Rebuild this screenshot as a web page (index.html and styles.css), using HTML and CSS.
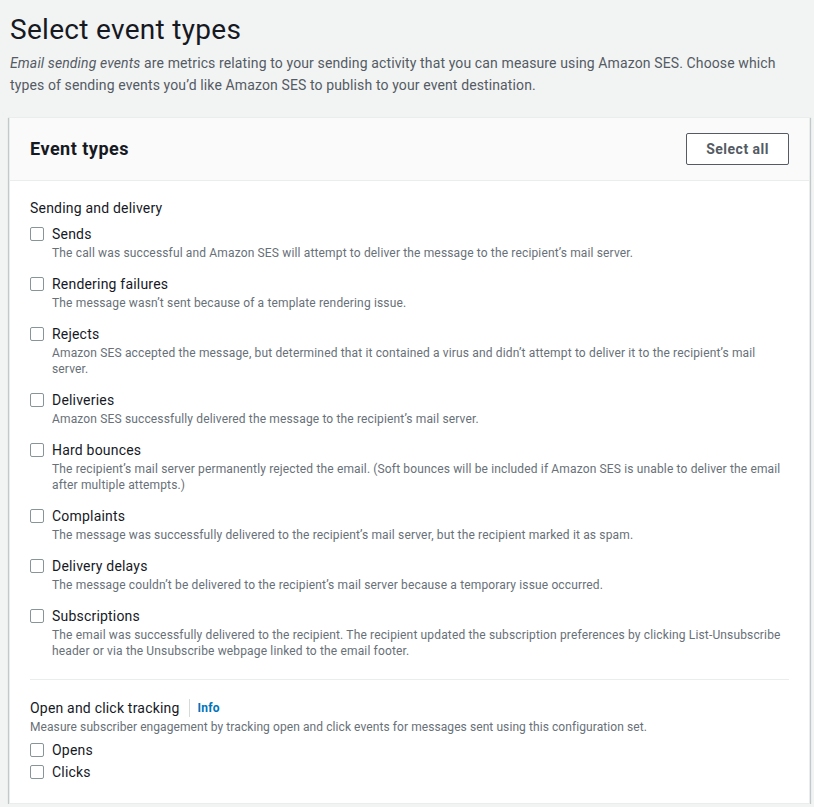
FILE: index.html
```html
<!DOCTYPE html>
<html>
<head>
<meta charset="utf-8">
<link rel="stylesheet" href="styles.css">
</head>
<body>
<div class="page">
  <h1 class="title">Select event types</h1>
  <p class="intro"><em>Email sending events</em> are metrics relating to your sending activity that you can measure using Amazon SES. Choose which types of sending events you’d like Amazon SES to publish to your event destination.</p>

  <div class="card">
    <div class="card-header">
      <h2 class="card-title">Event types</h2>
      <button class="btn">Select all</button>
    </div>
    <div class="card-body">
      <div class="group">
        <div class="group-label">Sending and delivery</div>
        <div class="options">
          <label class="option">
            <span class="box"></span>
            <span class="option-text"><span class="option-label">Sends</span><span class="option-desc">The call was successful and Amazon SES will attempt to deliver the message to the recipient’s mail server.</span></span>
          </label>
          <label class="option">
            <span class="box"></span>
            <span class="option-text"><span class="option-label">Rendering failures</span><span class="option-desc">The message wasn’t sent because of a template rendering issue.</span></span>
          </label>
          <label class="option">
            <span class="box"></span>
            <span class="option-text"><span class="option-label">Rejects</span><span class="option-desc">Amazon SES accepted the message, but determined that it contained a virus and didn’t attempt to deliver it to the recipient’s mail server.</span></span>
          </label>
          <label class="option">
            <span class="box"></span>
            <span class="option-text"><span class="option-label">Deliveries</span><span class="option-desc">Amazon SES successfully delivered the message to the recipient’s mail server.</span></span>
          </label>
          <label class="option">
            <span class="box"></span>
            <span class="option-text"><span class="option-label">Hard bounces</span><span class="option-desc">The recipient’s mail server permanently rejected the email. (Soft bounces will be included if Amazon SES is unable to deliver the email after multiple attempts.)</span></span>
          </label>
          <label class="option">
            <span class="box"></span>
            <span class="option-text"><span class="option-label">Complaints</span><span class="option-desc">The message was successfully delivered to the recipient’s mail server, but the recipient marked it as spam.</span></span>
          </label>
          <label class="option">
            <span class="box"></span>
            <span class="option-text"><span class="option-label">Delivery delays</span><span class="option-desc">The message couldn’t be delivered to the recipient’s mail server because a temporary issue occurred.</span></span>
          </label>
          <label class="option">
            <span class="box"></span>
            <span class="option-text"><span class="option-label">Subscriptions</span><span class="option-desc">The email was successfully delivered to the recipient. The recipient updated the subscription preferences by clicking List-Unsubscribe header or via the Unsubscribe webpage linked to the email footer.</span></span>
          </label>
        </div>
      </div>

      <div class="divider"></div>

      <div class="group">
        <div class="group-label">Open and click tracking <span class="sep"></span><a class="info">Info</a></div>
        <div class="group-desc">Measure subscriber engagement by tracking open and click events for messages sent using this configuration set.</div>
        <div class="options compact">
          <label class="option">
            <span class="box"></span>
            <span class="option-text"><span class="option-label">Opens</span></span>
          </label>
          <label class="option">
            <span class="box"></span>
            <span class="option-text"><span class="option-label">Clicks</span></span>
          </label>
        </div>
      </div>
    </div>
  </div>
</div>
</body>
</html>
```

FILE: styles.css
```css
html, body {
  margin: 0;
  padding: 0;
  background: #f2f3f3;
}
body {
  font-family: Roboto, "Liberation Sans", Arial, sans-serif;
  color: #16191f;
  letter-spacing: 0.2px;
}
.page {
  padding: 13px 4px 0 9px;
}
.title {
  margin: 0;
  font-size: 28px;
  font-weight: 400;
  line-height: 34px;
  color: #16191f;
  padding-left: 1px;
  letter-spacing: 0.3px;
}
.intro {
  margin: 5px 0 0 1px;
  font-size: 14px;
  line-height: 22px;
  color: #545b64;
  letter-spacing: 0.12px;
}
.intro em {
  font-style: italic;
}
.card {
  margin-top: 21px;
  background: #fff;
  border: 1px solid #eaeded;
  box-shadow: 0 1px 1px 0 rgba(0, 28, 36, 0.3), 1px 1px 1px 0 rgba(0, 28, 36, 0.15), -1px 1px 1px 0 rgba(0, 28, 36, 0.15);
}
.card-header {
  display: flex;
  align-items: center;
  justify-content: space-between;
  height: 62px;
  padding: 0 20px;
  background: #fafafa;
  border-bottom: 1px solid #eaeded;
}
.card-title {
  margin: 0;
  font-size: 18px;
  font-weight: 700;
  line-height: 22px;
  color: #16191f;
  letter-spacing: 0.5px;
}
.btn {
  height: 32px;
  padding: 0 19px;
  background: #fff;
  border: 1px solid #545b64;
  border-radius: 2px;
  font-family: inherit;
  font-size: 14px;
  font-weight: 700;
  color: #545b64;
  letter-spacing: 0.5px;
}
.card-body {
  padding: 16px 20px 20px;
}
.group-label {
  display: flex;
  align-items: center;
  font-size: 14px;
  line-height: 22px;
  color: #16191f;
}
.sep {
  display: inline-block;
  width: 1px;
  height: 18px;
  background: #d5dbdb;
  margin: 0 8px 0 9px;
}
.info {
  font-size: 12px;
  font-weight: 700;
  color: #0073bb;
}
.group-desc {
  font-size: 12px;
  line-height: 16px;
  color: #687078;
  letter-spacing: 0.08px;
}
.options {
  margin-top: 4px;
  display: flex;
  flex-direction: column;
  gap: 12px;
}
.options.compact {
  gap: 0;
}
.option {
  display: flex;
  align-items: flex-start;
}
.box {
  flex: none;
  width: 14px;
  height: 14px;
  margin-top: 4px;
  box-sizing: border-box;
  border: 1px solid #879596;
  border-radius: 2px;
  background: #fff;
  margin-right: 8px;
}
.option-text {
  display: flex;
  flex-direction: column;
}
.option-label {
  font-size: 14px;
  line-height: 22px;
  color: #16191f;
}
.option-desc {
  font-size: 12px;
  line-height: 16px;
  color: #687078;
  letter-spacing: 0.15px;
}
.divider {
  height: 1px;
  background: #eaeded;
  margin: 20px 0 17px;
}
```
